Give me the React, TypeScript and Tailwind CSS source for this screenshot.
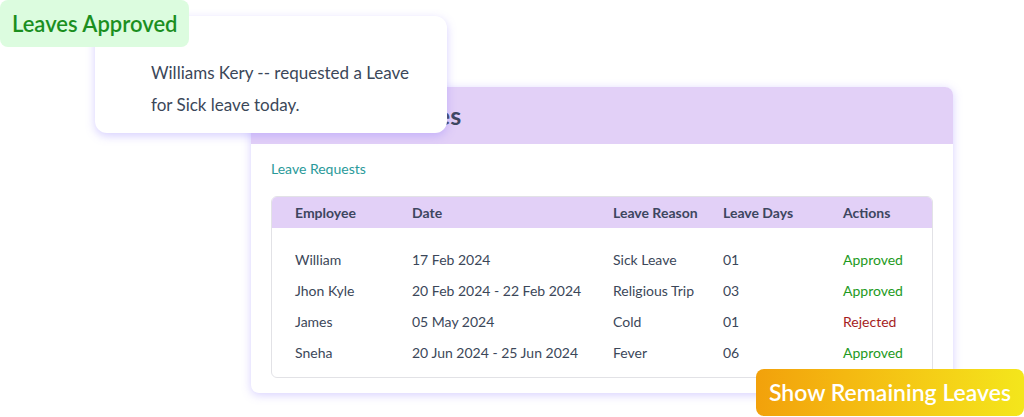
import React from 'react';

type Row = { name: string; date: string; reason: string; days: string; status: 'Approved' | 'Rejected' };

const rows: Row[] = [
  { name: 'William', date: '17 Feb 2024', reason: 'Sick Leave', days: '01', status: 'Approved' },
  { name: 'Jhon Kyle', date: '20 Feb 2024 - 22 Feb 2024', reason: 'Religious Trip', days: '03', status: 'Approved' },
  { name: 'James', date: '05 May 2024', reason: 'Cold', days: '01', status: 'Rejected' },
  { name: 'Sneha', date: '20 Jun 2024 - 25 Jun 2024', reason: 'Fever', days: '06', status: 'Approved' },
];

const cols = 'grid grid-cols-[117px_201px_110px_120px_1fr] pl-[23px]';

export default function App() {
  return (
    <div className="relative w-[1024px] h-[417px] overflow-hidden bg-white font-['Lato','Noto_Sans',sans-serif] text-[#3b4759]">
      {/* main card */}
      <div className="ml-[251px] mt-[87px] w-[702px] rounded-lg bg-white shadow-[0_2px_10px_rgba(140,120,255,0.35)] overflow-hidden">
        <div className="h-[57px] bg-[#e2d0f7] flex items-center px-5">
          <h2 className="text-[25px] font-bold text-[#3d4660]">Employee Leaves</h2>
        </div>
        <div className="px-5 pt-[14px] pb-[15px]">
          <p className="text-[14px] text-[#2a9a9a]">Leave Requests</p>
          <div className="mt-[17px] rounded-md border border-[#e2e2e6] overflow-hidden">
            <div className={`${cols} h-[31px] items-center bg-[#e2d0f7] text-[14px] font-bold text-[#3d4660]`}>
              <span>Employee</span>
              <span>Date</span>
              <span>Leave Reason</span>
              <span>Leave Days</span>
              <span>Actions</span>
            </div>
            <div className="pt-4 pb-[9px]">
              {rows.map((r) => (
                <div key={r.name} className={`${cols} h-[31px] items-center text-[14px]`}>
                  <span>{r.name}</span>
                  <span>{r.date}</span>
                  <span>{r.reason}</span>
                  <span>{r.days}</span>
                  <span className={r.status === 'Approved' ? 'text-[#1e9a22]' : 'text-[#a51d1d]'}>{r.status}</span>
                </div>
              ))}
            </div>
          </div>
        </div>
      </div>

      {/* notification */}
      <div className="absolute left-[95px] top-[16px] w-[352px] h-[117px] rounded-xl bg-white shadow-[0_3px_10px_rgba(140,120,255,0.35)] pl-14 pt-[41px]">
        <p className="text-[17px] leading-[32px] text-[#3b4759]">
          Williams Kery -- requested a Leave
          <br />
          for Sick leave today.
        </p>
      </div>

      {/* badge */}
      <div className="absolute left-0 top-0 w-[189px] h-[47px] rounded-lg bg-[#dcfcdf] flex items-center pl-3">
        <span className="text-[22px] font-semibold text-[#1b8f1f]">Leaves Approved</span>
      </div>

      {/* button */}
      <div className="absolute left-[756px] top-[369px] w-[268px] h-[47px] rounded-lg bg-gradient-to-r from-[#f2a10b] to-[#f4e61c] flex items-center justify-center">
        <span className="text-[23px] font-semibold text-white">Show Remaining Leaves</span>
      </div>
    </div>
  );
}
